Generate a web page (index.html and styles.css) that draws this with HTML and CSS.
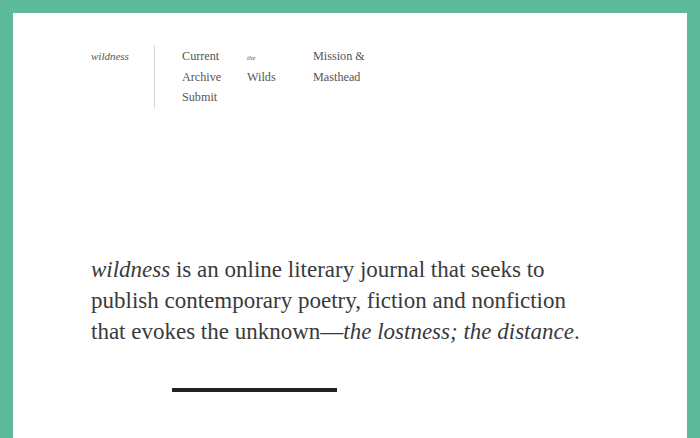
FILE: index.html
```html
<!DOCTYPE html>
<html lang="en">
<head>
<meta charset="utf-8">
<title>wildness</title>
<link rel="stylesheet" href="styles.css">
</head>
<body>
<div class="frame">
  <header class="site-header">
    <a class="brand" href="#">wildness</a>
    <nav class="nav">
      <ul class="nav-col">
        <li><a href="#">Current</a></li>
        <li><a href="#">Archive</a></li>
        <li><a href="#">Submit</a></li>
      </ul>
      <ul class="nav-col">
        <li><a href="#"><span class="tiny">the</span></a></li>
        <li><a href="#">Wilds</a></li>
      </ul>
      <ul class="nav-col">
        <li><a href="#">Mission &amp;</a></li>
        <li><a href="#">Masthead</a></li>
      </ul>
    </nav>
  </header>
  <main class="intro">
    <p class="lede"><em>wildness</em> is an online literary journal that seeks to publish contemporary poetry, fiction and nonfiction that evokes the unknown—<em>the lostness; the distance</em>.</p>
    <div class="rule"></div>
  </main>
</div>
</body>
</html>
```
FILE: styles.css
```css
html, body {
  margin: 0;
  padding: 0;
  background: #ffffff;
}

body {
  font-family: "Liberation Serif", "Times New Roman", serif;
  color: #3a3a3a;
}

.frame {
  box-sizing: border-box;
  min-height: 438px;
  border: 13px solid #5dba9b;
  border-bottom: 0;
  padding: 33px 0 0 78px;
}

.site-header {
  display: flex;
  align-items: flex-start;
}

.brand {
  width: 63px;
  font-size: 11px;
  font-style: italic;
  line-height: 20.5px;
  color: #555;
  text-decoration: none;
}

.nav {
  display: flex;
  border-left: 1px solid #cfdadb;
  padding-left: 27px;
  margin-top: -1px;
  padding-top: 1px;
}

.nav-col {
  list-style: none;
  margin: 0;
  padding: 0;
  width: 65px;
  font-size: 12.2px;
  line-height: 20.5px;
}

.nav-col li {
  height: 20.5px;
}

.nav-col:nth-child(2) {
  width: 66px;
}

.nav-col a {
  color: #555;
  text-decoration: none;
}

.tiny {
  font-size: 7px;
  font-style: italic;
  line-height: 1;
}

.intro {
  padding-top: 146px;
}

.lede {
  margin: 0;
  width: 510px;
  font-size: 23px;
  line-height: 31px;
  color: #3a3a3a;
}

.rule {
  width: 165px;
  height: 4px;
  background: #222;
  margin: 41px 0 0 81px;
}
```
